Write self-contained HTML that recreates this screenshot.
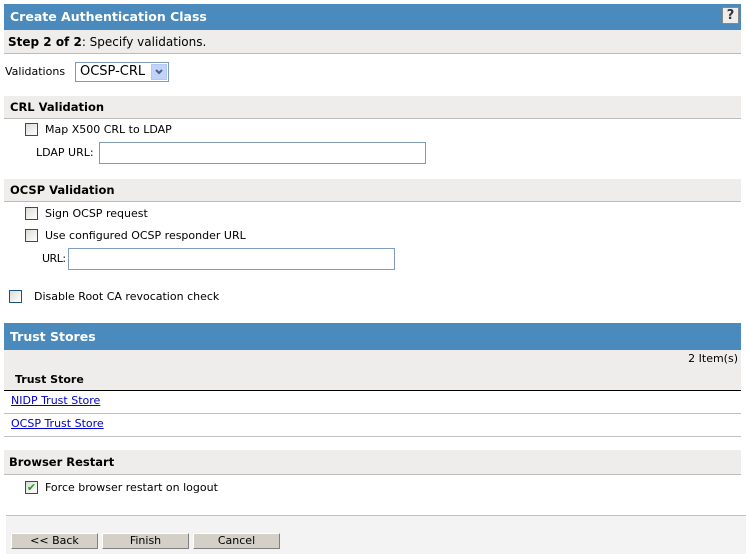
<!DOCTYPE html>
<html><head><meta charset="utf-8"><style>
*{margin:0;padding:0;box-sizing:border-box}
body{width:746px;height:554px;background:#fff;position:relative;overflow:hidden;font-family:"DejaVu Sans","Liberation Sans",sans-serif;font-size:11px;color:#000}
.a{position:absolute;white-space:nowrap}
.blue{position:absolute;left:4px;width:737px;background:#4a8abd;color:#fff;font-weight:bold;font-size:12.5px;padding-left:6px}
.gray{position:absolute;left:4px;width:737px;background:#eeedeb;border-bottom:1px solid #bdbcb8;font-weight:bold;font-size:11.5px;padding-left:6px}
.cb{position:absolute;width:13px;height:13px;border:1px solid #1c5180;background:linear-gradient(135deg,#dcdcd7,#fff)}
.in{position:absolute;height:22px;border:1px solid #7f9db9;background:#fff}
.btn{position:absolute;top:533px;height:16px;width:87px;background:#d4d0c8;border:1px solid;border-color:#fff #808080 #808080 #fff;text-align:center;font-size:11px;line-height:14px}
a{color:#00c;text-decoration:underline}
.ln{position:absolute;left:4px;width:737px;height:1px;background:#c0c0c0}
</style></head><body>
<div class="blue" style="top:4px;height:26px;line-height:26px">Create Authentication Class</div>
<div class="a" style="left:722px;top:7px;width:17px;height:17px;background:#eeedeb;border:1px solid #888;font-weight:bold;font-size:13px;line-height:15px;text-align:center;color:#333">?</div>
<div class="gray" style="top:30px;height:24px;line-height:24px;font-weight:normal;font-size:12px;padding-left:4px"><b>Step 2 of 2</b>: Specify validations.</div>

<div class="a" style="left:5px;top:65px">Validations</div>
<div class="a" style="left:75px;top:62px;width:94px;height:20px;border:1px solid #7f9db9;background:#fff;font-size:13px;line-height:18px;padding-left:4px">OCSP-CRL</div>
<div class="a" style="left:151px;top:64px;width:16px;height:16px;background:#c1d3fb;border:1px solid #b5c8f2"><svg width="14" height="14" style="position:absolute;left:0;top:0"><polyline points="4,5 7,8 10,5" fill="none" stroke="#4d6185" stroke-width="2"/></svg></div>

<div class="gray" style="top:96px;height:23px;line-height:23px">CRL Validation</div>
<div class="cb" style="left:25px;top:123px"></div>
<div class="a" style="left:45px;top:123px">Map X500 CRL to LDAP</div>
<div class="a" style="left:36px;top:146px">LDAP URL:</div>
<div class="in" style="left:99px;top:142px;width:327px"></div>

<div class="gray" style="top:179px;height:23px;line-height:23px">OCSP Validation</div>
<div class="cb" style="left:25px;top:207px"></div>
<div class="a" style="left:45px;top:207px">Sign OCSP request</div>
<div class="cb" style="left:25px;top:229px"></div>
<div class="a" style="left:45px;top:229px">Use configured OCSP responder URL</div>
<div class="a" style="left:42px;top:252px;letter-spacing:-0.5px">URL:</div>
<div class="in" style="left:68px;top:248px;width:327px"></div>

<div class="cb" style="left:9px;top:290px"></div>
<div class="a" style="left:34px;top:290px">Disable Root CA revocation check</div>

<div class="blue" style="top:323px;height:27px;line-height:27px">Trust Stores</div>
<div class="a" style="left:4px;top:350px;width:737px;height:40px;background:#eeedeb"></div>
<div class="a" style="right:8px;top:352px">2 Item(s)</div>
<div class="a" style="left:15px;top:373px;font-weight:bold">Trust Store</div>
<div class="a" style="left:4px;top:390px;width:737px;height:1px;background:#000"></div>
<div class="a" style="left:11px;top:394px"><a>NIDP Trust Store</a></div>
<div class="ln" style="top:413px"></div>
<div class="a" style="left:11px;top:417px"><a>OCSP Trust Store</a></div>
<div class="ln" style="top:436px"></div>

<div class="gray" style="top:450px;height:25px;line-height:25px;padding-left:5px">Browser Restart</div>
<div class="cb" style="left:25px;top:481px;color:#21a121;font-size:11px;line-height:11px;text-align:center;font-weight:bold">&#10004;</div>
<div class="a" style="left:45px;top:481px">Force browser restart on logout</div>

<div class="a" style="left:6px;top:515px;width:740px;height:39px;background:#f3f3f3;border-top:1px solid #c0c0c0"></div>
<div class="btn" style="left:11px">&lt;&lt; Back</div>
<div class="btn" style="left:102px">Finish</div>
<div class="btn" style="left:193px">Cancel</div>
</body></html>
